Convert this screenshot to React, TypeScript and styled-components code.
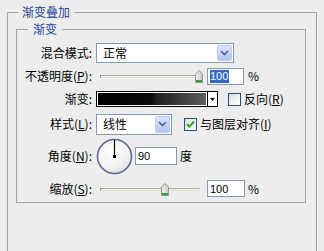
import React from 'react';
import styled, { createGlobalStyle } from 'styled-components';

const GlobalStyle = createGlobalStyle`
  html, body {
    margin: 0;
    padding: 0;
    background: #ededed;
    overflow: hidden;
  }
  body {
    font-family: "Noto Sans CJK SC", "DejaVu Sans", sans-serif;
    font-size: 12px;
    color: #000;
  }
`;

const Page = styled.div`
  width: 324px;
  height: 251px;
  box-sizing: border-box;
  padding-top: 5px;
  background: #ededed;
  overflow: hidden;
`;

const Group = styled.fieldset<{ $outer?: boolean }>`
  margin: ${(p) => (p.$outer ? '0 7px' : '0')};
  padding: ${(p) => (p.$outer ? '3px 10px 0 8px' : '5px 0 0 0')};
  border: 1px solid #a3a3a3;
  height: ${(p) => (p.$outer ? '300px' : 'auto')};
  box-sizing: border-box;
  min-inline-size: 0;
`;

const Legend = styled.legend<{ $offset: number; $pad: number }>`
  margin-left: ${(p) => p.$offset}px;
  padding: 0 ${(p) => p.$pad}px;
  line-height: 14px;
  font-size: 12px;
  color: #24479a;
`;

const Row = styled.div<{ $h: number }>`
  display: grid;
  grid-template-columns: 75px auto;
  column-gap: 4px;
  align-items: center;
  height: ${(p) => p.$h}px;
`;

const Label = styled.div`
  text-align: right;
  white-space: nowrap;
  line-height: 14px;
`;

const Controls = styled.div`
  display: flex;
  align-items: center;
`;

const Select = styled.div<{ $w: number; $h: number }>`
  width: ${(p) => p.$w}px;
  height: ${(p) => p.$h}px;
  box-sizing: border-box;
  border: 1px solid #7f9db9;
  background: #fff;
  padding: 1px;
  display: flex;
  align-items: stretch;
`;

const SelectText = styled.div`
  flex: 1;
  padding-left: 5px;
  display: flex;
  align-items: center;
  line-height: 14px;
`;

const ArrowButton = styled.div`
  width: 15px;
  box-sizing: border-box;
  border: 1px solid #b8cbf2;
  border-radius: 2px;
  background: linear-gradient(180deg, #dbe5fb 0%, #c2d3f8 60%, #b3c6f1 100%);
  display: flex;
  align-items: center;
  justify-content: center;
`;

const SliderBox = styled.div<{ $w: number }>`
  position: relative;
  width: ${(p) => p.$w}px;
  height: 14px;
`;

const Track = styled.div`
  position: absolute;
  left: 4px;
  right: 4px;
  top: 6px;
  height: 3px;
  box-sizing: border-box;
  background: #f7f6ee;
  border-top: 1px solid #a7a7a0;
  border-left: 1px solid #8d8d88;
  border-bottom: 1px solid #dedbd0;
  border-right: 1px solid #dedbd0;
`;

const Thumb = styled.svg`
  position: absolute;
  top: 1px;
`;

const NumberBox = styled.div<{ $w: number; $h: number; $gap: number }>`
  width: ${(p) => p.$w}px;
  height: ${(p) => p.$h}px;
  margin-left: ${(p) => p.$gap}px;
  box-sizing: border-box;
  border: 1px solid #7f9db9;
  background: #fff;
  padding-left: 2px;
  display: flex;
  align-items: center;
  font-family: "Liberation Sans", Arial, sans-serif;
  font-size: 11px;
`;

const Selected = styled.span`
  background: #316ac5;
  color: #fff;
  line-height: 13px;
  padding-right: 1px;
`;

const Unit = styled.span<{ $gap: number }>`
  margin-left: ${(p) => p.$gap}px;
  line-height: 14px;
`;

const GradientPicker = styled.div`
  width: 122px;
  height: 16px;
  box-sizing: border-box;
  border: 1px solid #000;
  display: flex;
  background: #fff;
`;

const GradientStrip = styled.div`
  flex: 1;
  border: 1px solid #fff;
  background: linear-gradient(
    90deg,
    #000 0%,
    #0b0b0b 50%,
    #202020 54%,
    #3a3a3a 75%,
    #5e5e5e 100%
  );
`;

const GradientArrow = styled.div`
  width: 9px;
  border-left: 1px solid #000;
  display: flex;
  align-items: center;
  justify-content: center;
`;

const Check = styled.label<{ $gap: number }>`
  display: flex;
  align-items: center;
  margin-left: ${(p) => p.$gap}px;
  line-height: 14px;
  white-space: nowrap;
`;

const CheckBox = styled.span`
  width: 13px;
  height: 13px;
  box-sizing: border-box;
  border: 1px solid #1c5180;
  background: linear-gradient(135deg, #dcdcd5 0%, #f4f4f1 60%, #fff 100%);
  margin-right: 3px;
  display: flex;
  align-items: center;
  justify-content: center;
`;

const Dial = styled.svg`
  display: block;
`;

const Chevron = () => (
  <svg width="9" height="6" viewBox="0 0 9 6">
    <path d="M1 1 L4.5 4.5 L8 1" fill="none" stroke="#4d6185" strokeWidth="1.6" />
  </svg>
);

const SliderThumb = ({ left }: { left: number }) => (
  <Thumb width="8" height="13" viewBox="0 0 8 13" style={{ left }}>
    <defs>
      <linearGradient id="thumbFill" x1="0" y1="0" x2="1" y2="0">
        <stop offset="0" stopColor="#f4f4f0" />
        <stop offset="1" stopColor="#c9c9c2" />
      </linearGradient>
    </defs>
    <polygon points="0.5,4 4,0.5 7.5,4 7.5,12.5 0.5,12.5" fill="url(#thumbFill)" stroke="#8c9a8c" />
    <rect x="1" y="10" width="6" height="2" fill="#2fa33a" />
  </Thumb>
);

// thumb position comes from the value, so it is computed here
const Slider = ({ value, min, max }: { value: number; min: number; max: number }) => {
  const width = 108;
  const left = 4 + ((value - min) / (max - min)) * (width - 12) - 1;
  return (
    <SliderBox $w={width}>
      <Track />
      <SliderThumb left={left} />
    </SliderBox>
  );
};

const Tick = () => (
  <svg width="9" height="9" viewBox="0 0 9 9">
    <path d="M1 4.2 L3.3 6.6 L8 1.6" fill="none" stroke="#21a121" strokeWidth="2" />
  </svg>
);

const u = (ch: string) => <u>{ch}</u>;

export default function App() {
  return (
    <Page>
      <GlobalStyle />
      <Group $outer>
        <Legend $offset={2} $pad={4}>渐变叠加</Legend>
        <Group>
          <Legend $offset={11} $pad={5}>渐变</Legend>

          <Row $h={24}>
            <Label>混合模式:</Label>
            <Controls>
              <Select $w={138} $h={20}>
                <SelectText>正常</SelectText>
                <ArrowButton>
                  <Chevron />
                </ArrowButton>
              </Select>
            </Controls>
          </Row>

          <Row $h={22}>
            <Label>不透明度({u('P')}):</Label>
            <Controls>
              <Slider value={100} min={0} max={100} />
              <NumberBox $w={37} $h={17} $gap={3}>
                <Selected>100</Selected>
              </NumberBox>
              <Unit $gap={4}>%</Unit>
            </Controls>
          </Row>

          <Row $h={24}>
            <Label>渐变:</Label>
            <Controls>
              <GradientPicker>
                <GradientStrip />
                <GradientArrow>
                  <svg width="5" height="3" viewBox="0 0 5 3">
                    <polygon points="0,0 5,0 2.5,3" fill="#000" />
                  </svg>
                </GradientArrow>
              </GradientPicker>
              <Check $gap={10}>
                <CheckBox />
                反向({u('R')})
              </Check>
            </Controls>
          </Row>

          <Row $h={26}>
            <Label>样式({u('L')}):</Label>
            <Controls>
              <Select $w={76} $h={21}>
                <SelectText>线性</SelectText>
                <ArrowButton>
                  <Chevron />
                </ArrowButton>
              </Select>
              <Check $gap={12}>
                <CheckBox>
                  <Tick />
                </CheckBox>
                与图层对齐({u('I')})
              </Check>
            </Controls>
          </Row>

          <Row $h={38}>
            <Label>角度({u('N')}):</Label>
            <Controls>
              <Dial width="37" height="37" viewBox="0 0 37 37">
                <defs>
                  <radialGradient id="dialFill" cx="0.4" cy="0.35" r="0.7">
                    <stop offset="0" stopColor="#ffffff" />
                    <stop offset="0.7" stopColor="#f1f1f1" />
                    <stop offset="1" stopColor="#dcdce0" />
                  </radialGradient>
                </defs>
                <circle cx="18.5" cy="18.5" r="17" fill="url(#dialFill)" stroke="#5d6b8f" strokeWidth="1.6" />
                <line x1="18.5" y1="18.5" x2="18.5" y2="2" stroke="#000" strokeWidth="1.2" />
                <rect x="17" y="17" width="3" height="3" fill="#000" />
              </Dial>
              <NumberBox $w={42} $h={18} $gap={2}>
                90
              </NumberBox>
              <Unit $gap={3}>度</Unit>
            </Controls>
          </Row>

          <Row $h={27}>
            <Label>缩放({u('S')}):</Label>
            <Controls>
              <Slider value={100} min={10} max={150} />
              <NumberBox $w={38} $h={17} $gap={3}>
                100
              </NumberBox>
              <Unit $gap={3}>%</Unit>
            </Controls>
          </Row>
        </Group>
      </Group>
    </Page>
  );
}
